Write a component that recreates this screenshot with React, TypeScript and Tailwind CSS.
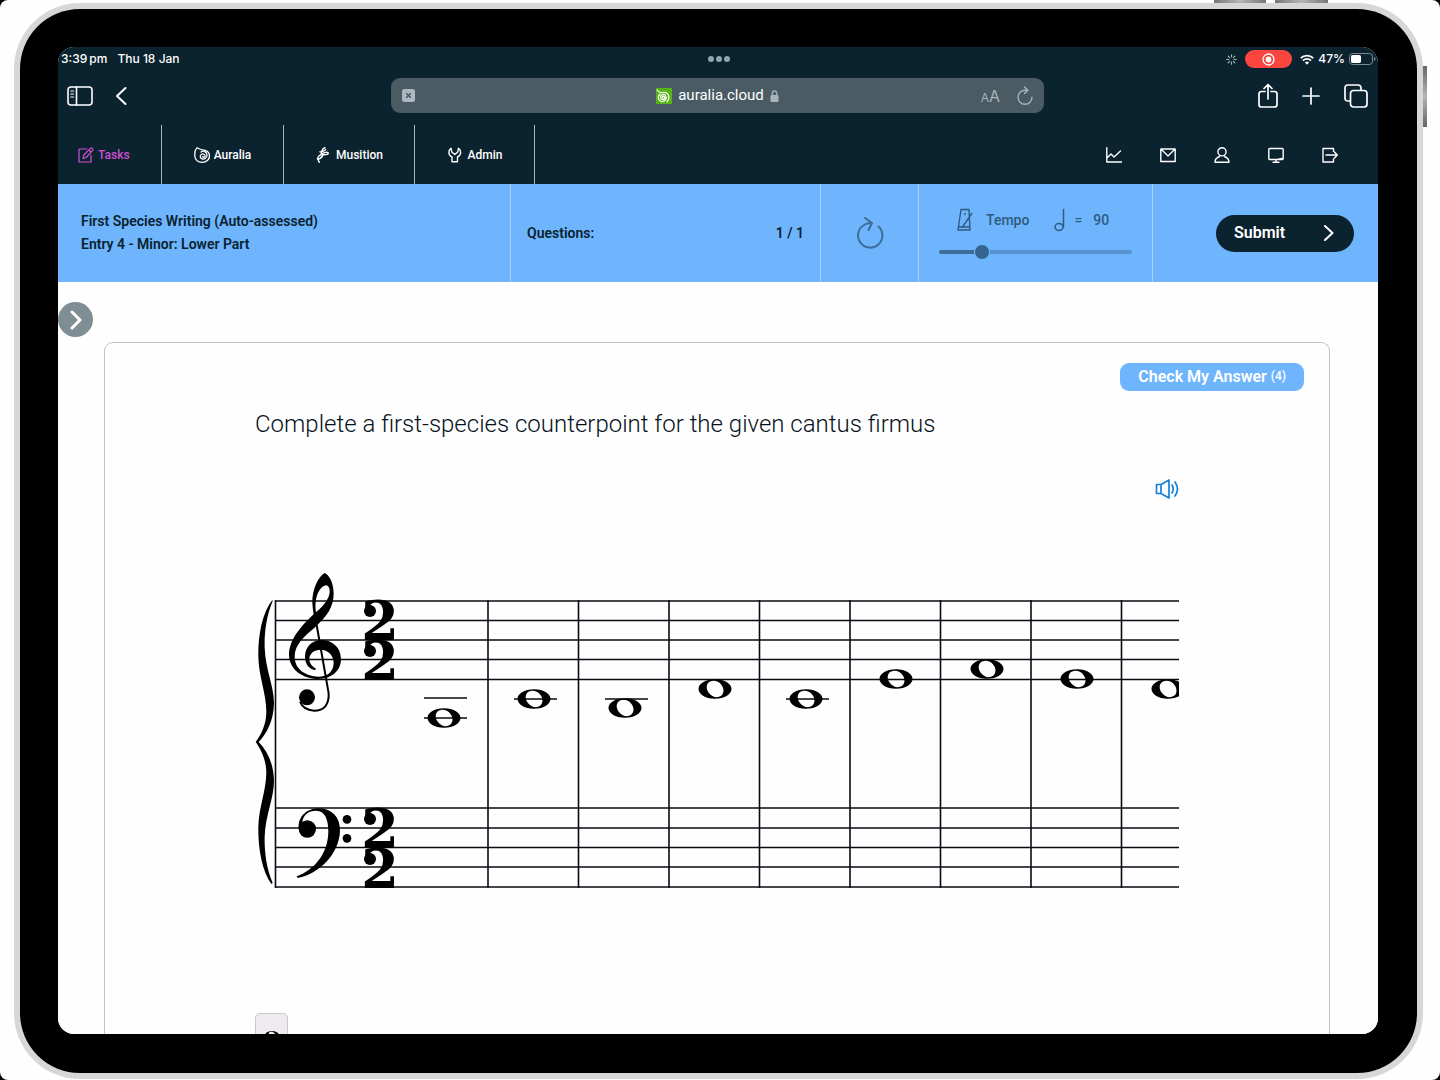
import { useState } from 'react';
import type { ReactNode } from 'react';

const NOTES = [
  { x: 444, y: 718, ledgers: [698, 718] },
  { x: 534, y: 699, ledgers: [699] },
  { x: 625, y: 708, ledgers: [699] },
  { x: 715, y: 689, ledgers: [] },
  { x: 806, y: 699, ledgers: [699] },
  { x: 896, y: 679, ledgers: [] },
  { x: 987, y: 669, ledgers: [] },
  { x: 1077, y: 679, ledgers: [] },
  { x: 1168, y: 689, ledgers: [] },
];

const STAFF_LINES = [601, 620.5, 640, 659.5, 679.5, 808, 828, 847.5, 867, 887];
const BARS = [275.5, 488, 578.5, 669, 759.5, 850, 940.5, 1031, 1121.5];

type IconProps = { children: ReactNode; className?: string; box?: string; width?: number };

function Icon({ children, className = 'size-4', box = '0 0 16 16', width = 1.2 }: IconProps) {
  return (
    <svg
      viewBox={box}
      className={`shrink-0 ${className}`}
      fill="none"
      stroke="currentColor"
      strokeWidth={width}
      strokeLinecap="round"
      strokeLinejoin="round"
      aria-hidden="true"
    >
      {children}
    </svg>
  );
}

function StatusBar() {
  return (
    <div className="flex h-6 items-center justify-between pl-[3px] pr-[2px] font-['Inter',sans-serif] text-xs font-medium">
      <div className="flex flex-1 gap-[10px]">
        <span>3:39{'\u2009'}pm</span>
        <span>Thu 18 Jan</span>
      </div>
      <div className="flex gap-[2px]">
        <i className="size-[6px] rounded-full bg-[#91a5b3]" />
        <i className="size-[6px] rounded-full bg-[#91a5b3]" />
        <i className="size-[6px] rounded-full bg-[#91a5b3]" />
      </div>
      <div className="flex flex-1 items-center justify-end">
        <Icon className="mr-2 size-[11px] text-[#a9b5bc]" box="0 0 12 12">
          <path d="M6 .8v2.400M6 8.800v2.400M.8 6h2.400M8.800 6h2.400M2.300 2.300 4 4M8 8l1.700 1.700M2.300 9.700 4 8M8 4l1.700-1.700" />
        </Icon>
        <span className="mr-2 flex h-[18px] w-[47px] items-center justify-center rounded-full bg-[#fb453f]">
          <Icon className="size-[13px]" box="0 0 14 14" width={1.4}>
            <circle cx="7" cy="7" r="5.900" />
            <circle cx="7" cy="7" r="2.400" fill="currentColor" />
          </Icon>
        </span>
        <svg viewBox="0 0 14 11" className="mr-1 h-[11px] w-[14px]" fill="none" stroke="currentColor" strokeWidth="1.900">
          <path d="M.8 4.200a8.800 8.800 0 0 1 12.400 0M3 6.600a5.600 5.600 0 0 1 8 0" />
          <path d="M7 10.800 4.900 8.600a3 3 0 0 1 4.200 0z" fill="currentColor" stroke="none" />
        </svg>
        <span>47%</span>
        <svg viewBox="0 0 27 12" className="ml-1 h-3 w-[27px]">
          <rect x=".5" y=".5" width="23" height="11" rx="3.200" fill="none" stroke="#7d8a92" />
          <rect x="2" y="2" width="10" height="8" rx="1.800" fill="#fff" />
          <path d="M25 4v4q1.500-.7 1.500-2T25 4" fill="#7d8a92" />
        </svg>
      </div>
    </div>
  );
}

function BrowserBar() {
  return (
    <div className="flex h-[54px] items-center justify-between pb-[5px] pl-[9px] pr-[10px]">
      <div className="flex flex-1 items-center gap-[22px]">
        <button aria-label="Sidebar">
          <Icon className="h-5 w-[26px]" box="0 0 26 20" width={1.600}>
            <rect x="1" y="1" width="24" height="18" rx="3" />
            <path d="M9.500 1v18" />
            <path d="M3.800 5h2.800M3.800 8h2.800M3.800 11h2.800" strokeWidth="1.200" />
          </Icon>
        </button>
        <button aria-label="Back">
          <Icon className="h-5 w-3" box="0 0 12 20" width={2}>
            <path d="M10.500 2 2 10l8.500 8" />
          </Icon>
        </button>
      </div>
      <div className="flex h-[35px] w-[653px] items-center justify-between rounded-[9px] bg-[#4a5b64] px-[11px]">
        <button className="flex w-24" aria-label="Page controls">
          <svg viewBox="0 0 13 13" className="size-[13px]">
            <rect width="13" height="13" rx="2.500" fill="#adb7c0" />
            <path d="m4.200 4.200 4.600 4.600m0-4.600L4.200 8.800" stroke="#42525c" strokeWidth="1.300" />
          </svg>
        </button>
        <div className="flex items-center gap-[6px] font-['Roboto',sans-serif]">
          <svg viewBox="0 0 16 16" className="size-4" fill="none" stroke="#fff" strokeWidth="1.200" strokeLinecap="round">
            <rect width="16" height="16" fill="#55b315" stroke="none" />
            <path d="M1 2c2 3 4 3 6 2.500 5-.8 8 4.500 4 9.500M4 6c-4 4 0 9 4 7 4-2 2-7-1-6.500C3.500 7 4 12 7 11.500c2.500-.5 2-3.500.3-3.300-1.300.2-1.300 1.800-.3 1.800" />
          </svg>
          <span className="text-[15px]">auralia.cloud</span>
          <svg viewBox="0 0 9 12" className="h-3 w-[9px]">
            <rect x=".5" y="5" width="8" height="7" rx="1.300" fill="#a9b3ba" />
            <path d="M2.300 5V3.200a2.200 2.200 0 0 1 4.400 0V5" fill="none" stroke="#a9b3ba" strokeWidth="1.300" />
          </svg>
        </div>
        <div className="flex w-24 items-center justify-end gap-[17px] text-[#a9b3ba]">
          <button aria-label="Text size" className="font-['Inter',sans-serif] text-base leading-5">
            <span className="text-xs">A</span>A
          </button>
          <button aria-label="Reload">
            <Icon className="h-5 w-4" box="0 0 16 20" width={1.400}>
              <path d="M8 4.200a7 7 0 1 0 7 7M8 4.200h2.500M7.500 1l3.300 3.200L7.500 7.500" />
            </Icon>
          </button>
        </div>
      </div>
      <div className="flex flex-1 items-center justify-end gap-6">
        <button aria-label="Share">
          <Icon className="h-[26px] w-5" box="0 0 20 26" width={1.700}>
            <path d="M7 8.500H3.500Q1 8.500 1 11v10.500Q1 24 3.500 24h13q2.500 0 2.500-2.500V11q0-2.500-2.500-2.500H13M10 16V2M6 5.500 10 1.500l4 4" />
          </Icon>
        </button>
        <button aria-label="New tab">
          <Icon className="size-[18px]" box="0 0 18 18" width={1.700}>
            <path d="M9 1v16M1 9h16" />
          </Icon>
        </button>
        <button aria-label="Tabs">
          <Icon className="size-6" box="0 0 24 24" width={1.700}>
            <path d="M6 17H4q-3 0-3-3V4q0-3 3-3h10q3 0 3 3v2" />
            <rect x="6.500" y="6.500" width="16.500" height="16.500" rx="3" />
          </Icon>
        </button>
      </div>
    </div>
  );
}

function Nav() {
  return (
    <nav className="flex h-[59px] items-stretch justify-between font-['Roboto',sans-serif] text-xs font-medium">
      <div className="flex">
        <a href="#tasks" className="flex w-[104px] items-center gap-1 border-r border-[#a9b3ba] pl-5 text-[#d050cf]">
          <Icon>
            <path d="M9 2H1v13h12V8" />
            <path d="M5 11.500 5.800 8 12.500 1.300q1-.8 2 .1t.1 2L8.200 10.500zM11 3l2.200 2.200" />
          </Icon>
          Tasks
        </a>
        <a href="#auralia" className="flex w-[122px] items-center justify-center gap-1 border-r border-[#a9b3ba]">
          <Icon width={1.300}>
            <path d="M2.800.9C1 3 .6 6 .8 9c.3 4 3.500 6.300 7.200 6.300 4.300 0 7.500-2.600 7.500-6.300 0-3.500-3-6.200-7-6.200-2.500 0-3.700-1.700-5.700-1.900" />
            <path d="M7 5c2.500-2 6 0 6 3.200 0 2.800-2.500 4.300-4.500 3.800-2.500-.5-3-3.500-1-4.700 1.800-1 4 .2 3.500 2-.4 1.200-2 1.200-2.200.2" />
          </Icon>
          Auralia
        </a>
        <a href="#musition" className="flex w-[131px] items-center justify-center gap-[5px] border-r border-[#a9b3ba]">
          <Icon width={1.400}>
            <path d="M10 .8C7 1.500 6.500 4 6 7.500M5 4.800c2 .3 4-.8 5.500-2M6 7.500c3 .5 7.500.3 7.300-1.500C13 4.500 9 5.500 6 7.500 4 8.800 2 9.800 2.500 12c2.500 0 4-1.500 5-3M3.800 12q-1 1.500.5 3.200" />
          </Icon>
          Musition
        </a>
        <a href="#admin" className="flex w-[120px] items-center justify-center gap-[5px] border-r border-[#a9b3ba]">
          <Icon width={1.400}>
            <path d="M4 1.300C1 3.500 1 8 5 10v4.700h5.500V10c4-2 4-6.500 1-8.700L10.700 5 7.800 7.500 4.800 5z" />
          </Icon>
          Admin
        </a>
      </div>
      <div className="flex items-center gap-[38px] pr-10">
        <a href="#reports" aria-label="Reports">
          <Icon width={1.400}>
            <path d="M.8.8V15h15M1 11l4-4 3 3 6.500-6" />
          </Icon>
        </a>
        <a href="#messages" aria-label="Messages">
          <Icon width={1.400}>
            <path d="M.8 2h14.400v12.500H.8zM1 2l7 7 7-7" />
          </Icon>
        </a>
        <a href="#profile" aria-label="Profile">
          <Icon width={1.400}>
            <circle cx="8" cy="4.800" r="4.100" />
            <path d="M5.500 9.500C3 10.500 1 12 1 15.200h14c0-3.200-2-4.700-4.500-5.700" />
          </Icon>
        </a>
        <a href="#display" aria-label="Display">
          <Icon width={1.400}>
            <rect x=".8" y="1.500" width="14.400" height="11" rx="1" />
            <path d="M8 12.500V15M5 15.200h6M10 12.400l4-1" />
          </Icon>
        </a>
        <a href="#exit" aria-label="Log out">
          <Icon width={1.400}>
            <path d="M11.500 4.500V1.500H1v13.500h10.500v-3M4 8h11M12.500 5 15.300 8l-2.800 3" />
          </Icon>
        </a>
      </div>
    </nav>
  );
}

function TaskBar() {
  const [tempo, setTempo] = useState(90);

  return (
    <section className="grid h-[98px] shrink-0 grid-cols-[453fr_310fr_98fr_234fr_225fr] divide-x divide-[#a9d2fd] bg-[#6eb5fd] font-['Roboto',sans-serif] text-sm text-[#0b222f]">
      <div className="flex flex-col justify-center pl-[23px] font-semibold leading-[23px]">
        <h1>First Species Writing (Auto-assessed)</h1>
        <h2>Entry 4 - Minor: Lower Part</h2>
      </div>
      <div className="flex items-center justify-between px-4 font-semibold">
        <span>Questions:</span>
        <span>1 / 1</span>
      </div>
      <div className="flex items-center justify-center text-[#3d6d98]">
        <button aria-label="Restart">
          <Icon className="h-8 w-7" box="0 0 28 32" width={2}>
            <path d="M22.500 9.500a12.200 12.200 0 1 1-14.500-1.500q3-2 7-2M9 1l7 5-3.500 7" />
          </Icon>
        </button>
      </div>
      <div className="flex flex-col items-center gap-3 px-5 pt-6 font-medium text-[#2f5a80]">
        <div className="flex h-6 w-full items-center pl-[18px]">
          <Icon className="mr-[13px] h-6 w-4" box="0 0 16 24" width={1.400}>
            <path d="M4 1.500h8L13 22H1zM1.500 19h11M5.500 19 14.800 5.500M8 5.500v1" />
          </Icon>
          <label htmlFor="tempo">Tempo</label>
          <Icon className="ml-[25px] h-6 w-[11px]" box="0 0 11 24" width={1.500}>
            <ellipse cx="5" cy="19" rx="4" ry="3.400" />
            <path d="M9.500 19V1.500" />
          </Icon>
          <span className="ml-[9px]">=</span>
          <output htmlFor="tempo" className="ml-[11px]">{tempo}</output>
        </div>
        <input
          id="tempo"
          type="range"
          min={50}
          max={250}
          value={tempo}
          onChange={(e) => setTempo(Number(e.target.value))}
          className="h-4 w-full appearance-none rounded-full bg-transparent [&::-webkit-slider-runnable-track]:h-1 [&::-webkit-slider-runnable-track]:rounded-full [&::-webkit-slider-runnable-track]:bg-[linear-gradient(90deg,#3d6d98_18%,#5592cf_18%)] [&::-webkit-slider-thumb]:-mt-[6px] [&::-webkit-slider-thumb]:size-4 [&::-webkit-slider-thumb]:appearance-none [&::-webkit-slider-thumb]:rounded-full [&::-webkit-slider-thumb]:border [&::-webkit-slider-thumb]:border-[#6eb5fd] [&::-webkit-slider-thumb]:bg-[#336590]"
        />
      </div>
      <div className="flex items-center justify-end pr-6">
        <button className="flex h-[37px] w-[138px] items-center justify-between rounded-full bg-[#0b222f] pl-[18px] pr-5 text-base font-semibold text-white">
          Submit
          <Icon className="h-4 w-[10px]" box="0 0 10 16" width={2}>
            <path d="m1 1 7.500 7L1 15" />
          </Icon>
        </button>
      </div>
    </section>
  );
}

function WholeNote({ x, y }: { x: number; y: number }) {
  return (
    <path
      transform={`translate(${x} ${y})`}
      fillRule="evenodd"
      d="M0-9.700C10-9.700 16.500-5 16.500 0S10 9.700 0 9.700-16.500 5-16.500 0-10-9.700 0-9.700M-3-8C-9-7-9.500-1-6.500 3.500-3.500 7.800 1 9 4 7.800 9.500 6 9.500 0 6.500-4 4-7.500 0-8.700-3-8"
    />
  );
}

function Meter({ y }: { y: number }) {
  return (
    <g>
      <text y={y} fontFamily="'DejaVu Serif', serif" fontWeight="700" fontSize="54" textAnchor="middle">
        <tspan x="380">2</tspan>
        <tspan x="380" dy="40">2</tspan>
      </text>
      <circle cx="370" cy={y - 29} r="6" />
      <circle cx="370" cy={y + 11} r="6" />
    </g>
  );
}

function Score() {
  return (
    <svg viewBox="255 570 924 335" className="mt-[71px] block w-full text-black" fill="currentColor" role="img" aria-label="Grand staff, two two time">
      <g stroke="#0b0912" strokeWidth="1.600">
        {STAFF_LINES.map((y) => (
          <path key={y} d={`M275 ${y}H1180`} />
        ))}
        {BARS.map((x) => (
          <path key={x} d={`M${x} 600V888`} />
        ))}
        {NOTES.flatMap((n) =>
          n.ledgers.map((y) => <path key={`${n.x}-${y}`} d={`M${n.x - 20} ${y}h43`} />)
        )}
      </g>
      {NOTES.map((n) => (
        <WholeNote key={n.x} x={n.x} y={n.y} />
      ))}
      <Meter y={640} />
      <Meter y={848} />
      <g transform="translate(240 560) scale(.33333)">
        {/* brace */}
        <path d="M97 120C65 160 54 230 55 290 56 350 79 400 79 455 79 495 62 525 47 546 62 567 79 600 79 637 79 692 56 742 55 802 54 862 65 932 94 972L98 968C78 922 73 870 74 830 76 765 102 715 102 662 101 612 82 572 56 546 82 520 101 480 102 430 102 377 76 330 74 262 73 222 78 170 98 124z" />
        {/* treble clef */}
        <path
          fillRule="evenodd"
          d="M254 39C234 50 216 90 217 128 218 145 220 155 221 163 192 190 147 235 147 285 148 330 190 357 235 357 276 356 303 332 303 297 302 262 278 240 243 240 214 242 195 262 195 290 196 316 210 328 226 330L228 326C214 318 208 309 208 297 209 280 222 269 242 269 264 270 281 285 281 309 280 336 262 350 236 350 198 349 164 328 164 290 164 252 194 228 227 200 260 170 281 142 281 100 280 66 268 46 254 39M228 157C222 118 236 80 258 76 272 78 272 102 262 118 254 134 240 147 228 157"
        />
        <path d="M230 195 266 400Q268 452 222 452 190 450 180 425" fill="none" stroke="currentColor" strokeWidth="6" />
        <circle cx="201" cy="412" r="24" />
        {/* bass clef */}
        <g transform="translate(0 480)">
          <path d="M176 325C174 288 200 265 238 265 276 267 300 290 300 332 298 400 240 460 173 474L170 469C225 448 264 400 265 335 265 298 255 272 228 272 205 272 188 286 187 308z" />
          <circle cx="202" cy="327" r="26" />
          <circle cx="321" cy="298" r="13" />
          <circle cx="321" cy="355" r="13" />
        </g>
      </g>
    </svg>
  );
}

function Exercise() {
  return (
    <main className="flex min-h-0 flex-1 flex-col bg-[#fefefe] pt-5 font-['Roboto',sans-serif]">
      <button aria-label="Expand panel" className="flex size-[35px] shrink-0 items-center justify-center rounded-full bg-[#7f8d95] text-white">
        <Icon className="h-5 w-3" box="0 0 12 20" width={3}>
          <path d="m2 2 8 8-8 8" />
        </Icon>
      </button>
      <div className="ml-[46px] mr-12 mt-[5px] flex min-h-0 flex-1 flex-col overflow-hidden rounded-t-[9px] border border-b-0 border-[#c2c2cc] pt-5">
        <button className="mr-[25px] h-7 shrink-0 self-end rounded-[9px] bg-[#6eb5fd] px-[18px] text-base font-semibold text-white">
          Check My Answer <sup className="-top-[2px] text-xs font-medium">(4)</sup>
        </button>
        <div className="mt-[17px] flex flex-col px-[150px]">
          <p className="text-2xl font-[350] text-[#06121c]">Complete a first-species counterpoint for the given cantus firmus</p>
          <button aria-label="Play" className="mt-[39px] self-end text-[#1480d8]">
            <Icon className="h-5 w-6" box="0 0 24 20" width={1.700}>
              <path d="M1.500 5.500H6v9H1.500zM6 5.500l8-4.500v18l-8-4.500M17 6q2.500 4 0 8M20 3q5 7 0 14" />
            </Icon>
          </button>
          <Score />
          <button aria-label="Whole note" className="mt-[108px] flex h-11 w-[33px] justify-center rounded-[5px] border border-[#c9c7ce] bg-[#edebef] pt-4">
            <svg viewBox="-17 -12 34 24" className="h-[10px] w-[14px]">
              <WholeNote x={0} y={0} />
            </svg>
          </button>
        </div>
      </div>
    </main>
  );
}

export default function App() {
  return (
    <div className="h-screen overflow-hidden bg-black">
      <div className="relative h-full rounded-lg bg-[#fefefe] pb-px pl-[14px] pr-[17px] pt-[3px]">
        {/* hardware buttons */}
        <i className="absolute right-[174px] top-0 h-[3px] w-[52px] bg-linear-to-r from-[#77777c] via-[#b5b5b8] to-[#77777c]" />
        <i className="absolute right-[112px] top-0 h-[3px] w-[53px] bg-linear-to-r from-[#77777c] via-[#b5b5b8] to-[#77777c]" />
        <i className="absolute right-[13px] top-[66px] h-[61px] w-1 bg-linear-to-b from-[#66666b] via-[#b5b5b8] to-[#66666b]" />
        <div className="h-full rounded-[66px] bg-[#d8d7d7] p-[6px]">
          <div className="h-full rounded-[60px] bg-black pb-[39px] pl-[38px] pr-[39px] pt-[38px]">
            <div className="flex h-full flex-col overflow-hidden rounded-[16px] bg-[#fefefe]">
              <header className="shrink-0 bg-[#0b222f] text-white">
                <StatusBar />
                <BrowserBar />
                <Nav />
              </header>
              <TaskBar />
              <Exercise />
            </div>
          </div>
        </div>
      </div>
    </div>
  );
}
